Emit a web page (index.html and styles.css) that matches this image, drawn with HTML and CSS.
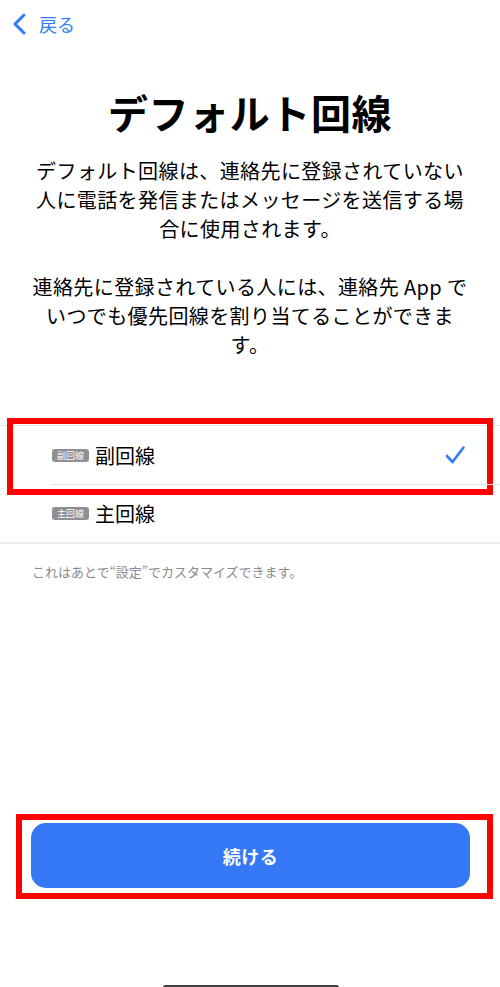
FILE: index.html
```html
<!DOCTYPE html>
<html lang="ja">
<head>
    <meta charset="UTF-8">
    <meta name="viewport" content="width=device-width, initial-scale=1.0">
    <title>デフォルト回線</title>
    <link rel="stylesheet" href="styles.css">
</head>
<body>
    <div class="page">
        <!-- Navigation -->
        <nav class="nav">
            <a class="back" href="#">
                <svg class="chevron" width="16" height="24" viewBox="0 0 16 24">
                    <polyline points="13,3 4,12 13,21" fill="none" stroke="currentColor" stroke-width="3" stroke-linecap="round" stroke-linejoin="round"/>
                </svg>
                <span>戻る</span>
            </a>
        </nav>

        <h1 class="title">デフォルト回線</h1>
        <p class="lead">デフォルト回線は、連絡先に登録されていない人に電話を発信またはメッセージを送信する場合に使用されます。</p>
        <p class="lead lead-second">連絡先に登録されている人には、連絡先 App でいつでも優先回線を割り当てることができます。</p>

        <!-- Auswahl -->
        <ul class="lines">
            <li class="line-row selected">
                <span class="badge">副回線</span>
                <span class="line-name">副回線</span>
                <svg class="check" width="22" height="20" viewBox="0 0 22 20">
                    <polyline points="3,11 8.5,17 19.5,2.5" fill="none" stroke="currentColor" stroke-width="2.6" stroke-linecap="round" stroke-linejoin="round"/>
                </svg>
                <span class="mark mark-row"></span>
            </li>
            <li class="line-row">
                <span class="badge">主回線</span>
                <span class="line-name">主回線</span>
            </li>
        </ul>
        <p class="note">これはあとで“設定”でカスタマイズできます。</p>

        <div class="actions">
            <button class="continue">続ける</button>
            <span class="mark mark-button"></span>
        </div>
        <div class="home-indicator"></div>
    </div>
</body>
</html>
```

FILE: styles.css
```css
body {
    margin: 0;
    font-family: "Noto Sans CJK JP", "Noto Sans", sans-serif;
    background: #fff;
    color: #000;
    overflow: hidden;
}
.page {
    display: flex;
    flex-direction: column;
    min-height: 987px;
}
.nav {
    height: 50px;
    padding-left: 11px;
    display: flex;
    align-items: center;
}
.back {
    display: flex;
    align-items: center;
    gap: 12px;
    color: #2f7cf6;
    text-decoration: none;
    font-size: 18px;
    margin-top: -2px;
}
.chevron {
    display: block;
}
.title {
    margin: 38px 0 0;
    font-size: 40px;
    line-height: 48px;
    font-weight: 700;
    letter-spacing: 0.6px;
    text-align: center;
}
.lead {
    margin: 20px 0 0;
    padding: 0 28px;
    font-size: 20px;
    line-height: 29px;
    letter-spacing: 0.4px;
    text-align: center;
    line-break: strict;
}
.lead-second {
    margin-top: 29px;
}
.lines {
    list-style: none;
    margin: 66px 0 0;
    padding: 0;
    border-top: 1px solid #e3e3e5;
    border-bottom: 2px solid #ececee;
}
.line-row {
    position: relative;
    display: flex;
    align-items: center;
    height: 57px;
    margin-left: 52px;
    padding-right: 34px;
}
.line-row + .line-row {
    border-top: 1px solid #e3e3e5;
}
.selected {
    height: 58px;
}
.badge {
    background: #8e8e93;
    color: #fff;
    font-size: 9px;
    line-height: 13px;
    padding: 0 5px;
    border-radius: 3px;
    margin-right: 6px;
}
.line-name {
    font-size: 20px;
    flex: 1;
}
.check {
    color: #2f7cf6;
}
.note {
    margin: 19px 0 0;
    padding-left: 32px;
    font-size: 13px;
    line-height: 18px;
    color: #8a8a8e;
}
.actions {
    position: relative;
    margin: auto 30px 99px 31px;
}
.continue {
    display: block;
    width: 100%;
    height: 65px;
    border: none;
    border-radius: 15px;
    background: #3478f6;
    color: #fff;
    font-family: inherit;
    font-size: 18px;
    font-weight: 700;
    letter-spacing: 0.5px;
}
/* rote Markierungen */
.mark {
    position: absolute;
    border: 6px solid #ff0000;
    pointer-events: none;
}
.mark-row {
    top: -8px;
    bottom: -11px;
    left: -45px;
    right: 7px;
}
.mark-button {
    top: -9px;
    bottom: -11px;
    left: -15px;
    right: -23px;
}
.home-indicator {
    position: absolute;
    top: 985px;
    left: 163px;
    width: 176px;
    height: 5px;
    border-radius: 3px;
    background: #404040;
}
```
